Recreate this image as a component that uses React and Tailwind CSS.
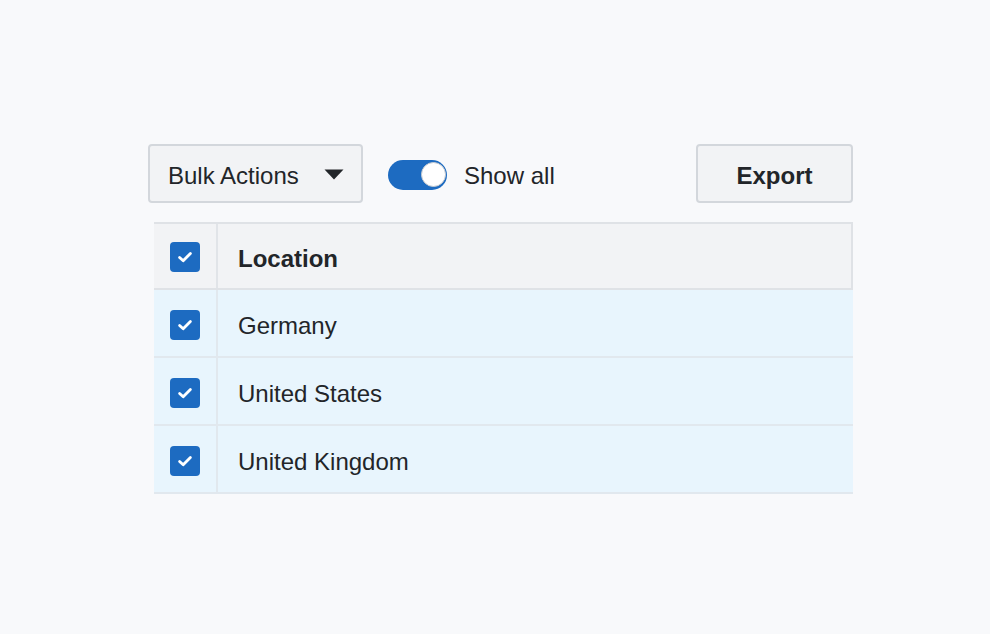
import { useState } from 'react'

function Check() {
  return (
    <span className="flex h-[30px] w-[30px] items-center justify-center rounded-[4px] bg-[#1d6bc1]">
      <svg width="18" height="18" viewBox="0 0 18 18" fill="none">
        <path d="M3.6 9.4l3.6 3.4 7.2-7.4" stroke="white" strokeWidth="2.8" strokeLinecap="round" strokeLinejoin="round" />
      </svg>
    </span>
  )
}

const rows = ['Germany', 'United States', 'United Kingdom']

export default function App() {
  const [showAll, setShowAll] = useState(true)

  return (
    <div className="min-h-screen bg-[#f8f9fb] pl-[148px] pt-[144px] text-[#222529]" style={{ fontFamily: '"Liberation Sans", Arial, sans-serif' }}>
      <div className="flex h-[59px] w-[705px] items-center">
        <button type="button" className="flex h-[59px] w-[215px] items-center justify-between rounded-[4px] border-2 border-[#d3d7dc] bg-[#f2f3f5] pl-[18px] pr-[17px] text-[24px]">
          <span className="pt-[5px]">Bulk Actions</span>
          <svg width="20" height="11" viewBox="0 0 20 11" className="mt-[2px]">
            <path d="M0.5 0.5h19L10 10.5z" fill="#222529" />
          </svg>
        </button>

        <button
          type="button"
          onClick={() => setShowAll(v => !v)}
          className={'ml-[25px] mt-[2px] flex h-[30px] w-[59px] items-center rounded-full px-[1.5px] ' + (showAll ? 'justify-end bg-[#1d6bc1]' : 'justify-start bg-[#c3c8ce]')}
        >
          <span className="h-[25px] w-[25px] rounded-full border border-[#c6cbd1] bg-white" />
        </button>
        <span className="ml-[17px] pt-[5px] text-[24px]">Show all</span>

        <button type="button" className="ml-auto h-[59px] w-[157px] rounded-[4px] border-2 border-[#d3d7dc] bg-[#f2f3f5] pt-[5px] text-[24px] font-bold">
          Export
        </button>
      </div>

      <div className="ml-[6px] mt-[19px] w-[699px]">
        <div className="flex h-[68px] border-y-2 border-r-2 border-[#dfe2e6] bg-[#f2f3f5]">
          <div className="flex w-[64px] items-center justify-center border-r-2 border-[#e1e4e8] pt-[2px]">
            <Check />
          </div>
          <div className="flex items-center pl-[20px] pt-[5px] text-[24px] font-bold">Location</div>
        </div>
        {rows.map(name => (
          <div key={name} className="flex h-[68px] border-b-2 border-[#e1e8ee] bg-[#e8f5fd]">
            <div className="flex w-[64px] items-center justify-center border-r-2 border-[#e1e8ee] pt-[4px]">
              <Check />
            </div>
            <div className="flex items-center pl-[20px] pt-[5px] text-[24px]">{name}</div>
          </div>
        ))}
      </div>
    </div>
  )
}
